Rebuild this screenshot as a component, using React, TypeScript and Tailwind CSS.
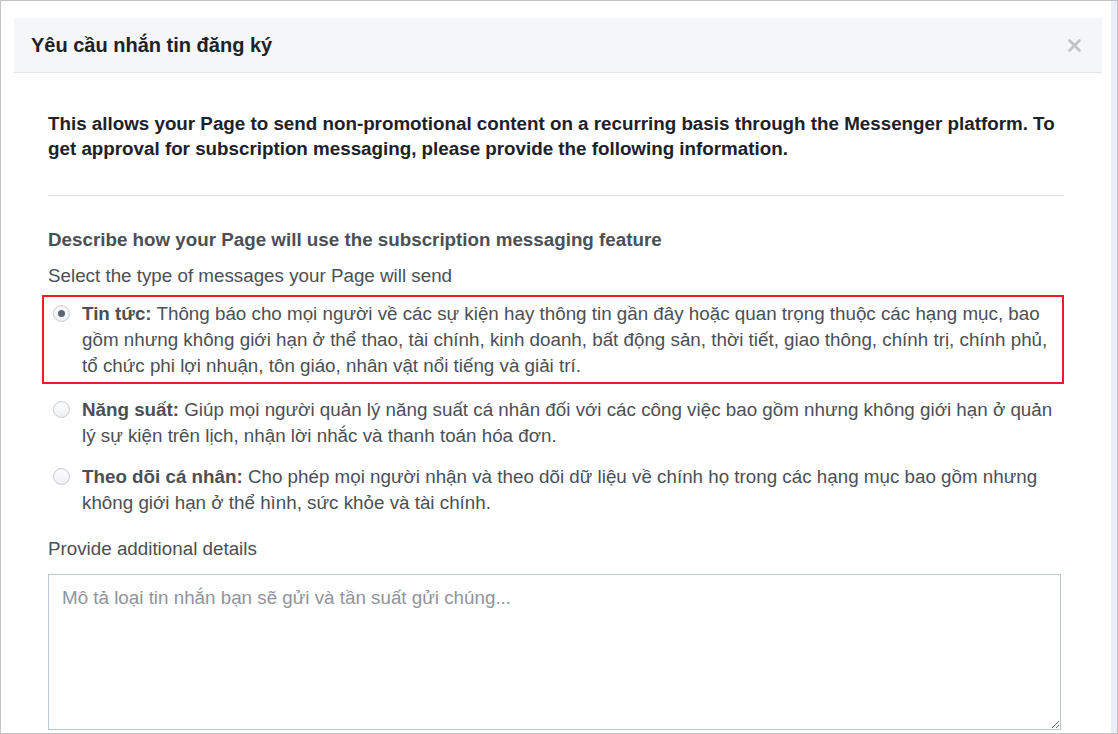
import React from 'react'

const font = { fontFamily: '"Liberation Sans", Arial, sans-serif' }

function Radio({ checked }: { checked?: boolean }) {
  return (
    <div className="w-[17px] h-[17px] rounded-full border border-[#c9ccd1] bg-gradient-to-b from-[#ffffff] to-[#eceef1] flex items-center justify-center shadow-[inset_0_1px_1px_rgba(0,0,0,0.05)]">
      {checked && <div className="w-[7px] h-[7px] rounded-full bg-[#5f6673]" />}
    </div>
  )
}

interface OptionProps {
  title: string
  text: string
  checked?: boolean
}

function Option({ title, text, checked }: OptionProps) {
  return (
    <div className="flex items-start">
      <div className="w-[34px] shrink-0 pl-[5px] pt-[4px]">
        <Radio checked={checked} />
      </div>
      <p className="text-[18.8px] leading-[26px] text-[#4b4f56] pr-[2px]">
        <b className="font-bold">{title}</b> {text}
      </p>
    </div>
  )
}

export default function App() {
  return (
    <div style={font} className="w-[1118px] h-[734px] border border-[#c4c4c4] bg-white flex overflow-hidden">
      <div className="flex-1 pl-[13px] pt-[17px] pr-[9px]">
        <div className="bg-white">
          <div className="h-[55px] bg-[#f5f6f7] border-b border-[#e5e5e5] flex items-center justify-between pl-[17px] pr-[20px]">
            <div className="text-[20px] font-bold text-[#1d2129]">Yêu cầu nhắn tin đăng ký</div>
            <svg width="13" height="13" viewBox="0 0 13 13" className="mr-[1px]">
              <path d="M1.5 1.5 L11.5 11.5 M11.5 1.5 L1.5 11.5" stroke="#bec2c9" strokeWidth="2.6" strokeLinecap="round" />
            </svg>
          </div>

          <div className="pl-[34px] pr-[38px] pt-[38px]">
            <p className="text-[18.8px] leading-[25px] font-bold text-[#1d2129]">
              This allows your Page to send non-promotional content on a recurring basis through the Messenger platform. To get approval for subscription messaging, please provide the following information.
            </p>

            <div className="h-px bg-[#dddfe2] mt-[34px]" />

            <div className="mt-[31px] text-[18.8px] leading-[25px] font-bold text-[#4b4f56]">
              Describe how your Page will use the subscription messaging feature
            </div>
            <div className="mt-[11px] text-[18.8px] leading-[25px] text-[#4b4f56]">
              Select the type of messages your Page will send
            </div>

            <div className="mt-[7px] -ml-[6px] border-2 border-[#ee1c25] pt-[4px] pb-[3px] pl-[4px]">
              <Option
                checked
                title="Tin tức:"
                text="Thông báo cho mọi người về các sự kiện hay thông tin gần đây hoặc quan trọng thuộc các hạng mục, bao gồm nhưng không giới hạn ở thể thao, tài chính, kinh doanh, bất động sản, thời tiết, giao thông, chính trị, chính phủ, tổ chức phi lợi nhuận, tôn giáo, nhân vật nổi tiếng và giải trí."
              />
            </div>

            <div className="mt-[13px]">
              <Option
                title="Năng suất:"
                text="Giúp mọi người quản lý năng suất cá nhân đối với các công việc bao gồm nhưng không giới hạn ở quản lý sự kiện trên lịch, nhận lời nhắc và thanh toán hóa đơn."
              />
            </div>
            <div className="mt-[15px]">
              <Option
                title="Theo dõi cá nhân:"
                text="Cho phép mọi người nhận và theo dõi dữ liệu về chính họ trong các hạng mục bao gồm nhưng không giới hạn ở thể hình, sức khỏe và tài chính."
              />
            </div>

            <div className="mt-[20px] text-[18.8px] leading-[26px] text-[#4b4f56]">Provide additional details</div>

            <textarea
              style={font}
              className="mt-[12px] w-[1013px] h-[156px] border border-[#bdc7d8] px-[13px] py-[12px] text-[18.8px] leading-[22px] text-[#1d2129] placeholder:text-[#90949c] outline-none resize-y block"
              placeholder="Mô tả loại tin nhắn bạn sẽ gửi và tần suất gửi chúng..."
            />
          </div>
        </div>
      </div>
      <div className="w-[6px] bg-[#e9eef7]" />
    </div>
  )
}
